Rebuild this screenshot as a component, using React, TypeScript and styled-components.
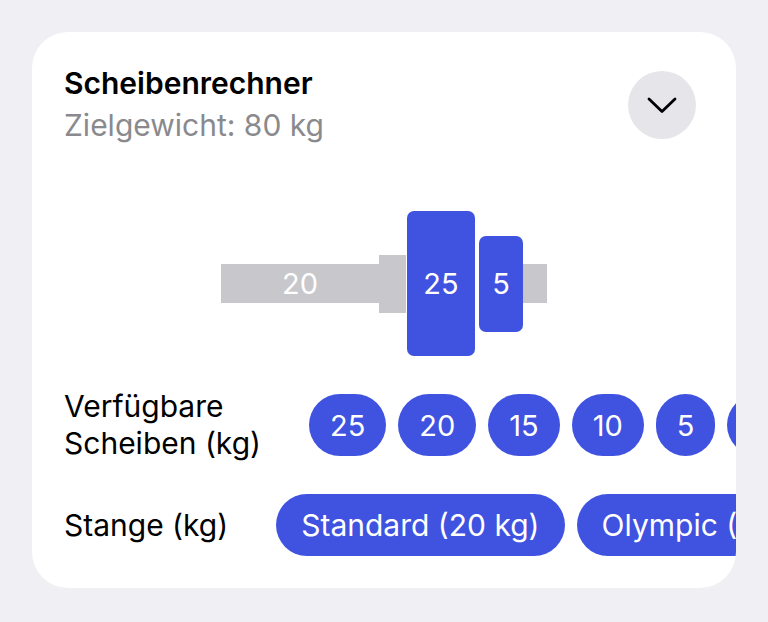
import React from 'react';
import styled, { createGlobalStyle } from 'styled-components';

const GlobalStyle = createGlobalStyle`
  html, body {
    margin: 0;
    padding: 0;
    background: #efeff4;
    font-family: 'Inter', 'Noto Sans', sans-serif;
    -webkit-font-smoothing: antialiased;
  }
`;

const Page = styled.div`
  padding: 32px;
  width: 704px;
`;

const Card = styled.div`
  background: #ffffff;
  border-radius: 36px;
  padding: 32px 32px 32px;
  overflow: hidden;
`;

const Header = styled.div`
  display: flex;
  justify-content: space-between;
  align-items: center;
`;

const Title = styled.div`
  font-size: 30px;
  line-height: 38px;
  font-weight: 600;
  color: #000;
`;

const Subtitle = styled.div`
  font-size: 30px;
  line-height: 38px;
  margin-top: 4px;
  color: #8a8a8e;
`;

const ToggleButton = styled.button`
  width: 68px;
  height: 68px;
  border-radius: 50%;
  border: none;
  background: #e5e5ea;
  display: flex;
  align-items: center;
  justify-content: center;
  padding: 0;
  margin-right: 8px;
  margin-top: 2px;
`;

const Barbell = styled.div`
  display: flex;
  align-items: center;
  justify-content: center;
  margin-top: 67px;
  height: 145px;
`;

const Bar = styled.div<{ $w: number }>`
  width: ${p => p.$w}px;
  height: 39px;
  background: #c7c7cc;
  color: #fff;
  font-size: 29px;
  display: flex;
  align-items: center;
  justify-content: center;
`;

const Collar = styled.div`
  width: 27px;
  height: 58px;
  background: #c7c7cc;
`;

const Plates = styled.div`
  display: flex;
  align-items: center;
  gap: 4px;
  margin-left: 1px;
`;

const Plate = styled.div<{ $w: number; $h: number }>`
  width: ${p => p.$w}px;
  height: ${p => p.$h}px;
  border-radius: 7px;
  background: #3f52e0;
  color: #fff;
  font-size: 29px;
  display: flex;
  align-items: center;
  justify-content: center;
`;

const Row = styled.div`
  display: flex;
  align-items: center;
  gap: 48px;
  margin-top: 32px;
`;

const Label = styled.div`
  font-size: 30px;
  line-height: 37px;
  color: #000;
  flex-shrink: 0;
`;

const ChipList = styled.div`
  display: flex;
  gap: 12px;
  overflow: hidden;
  margin-right: -32px;
  flex: 1;
  min-width: 0;
`;

const Chip = styled.div<{ $text?: boolean }>`
  flex-shrink: 0;
  height: 62px;
  border-radius: 31px;
  padding: 0 ${p => (p.$text ? 25 : 21)}px;
  background: #3f52e0;
  color: #fff;
  font-size: ${p => (p.$text ? 30 : 29)}px;
  display: flex;
  align-items: center;
  justify-content: center;
  white-space: nowrap;
`;

const plates = [25, 20, 15, 10, 5, 2.5];
const bars = ['Standard (20 kg)', 'Olympic (20 kg)', 'Kurz (10 kg)'];

export default function App() {
  return (
    <Page>
      <GlobalStyle />
      <Card>
        <Header>
          <div>
            <Title>Scheibenrechner</Title>
            <Subtitle>Zielgewicht: 80 kg</Subtitle>
          </div>
          <ToggleButton aria-label="Ausklappen">
            <svg width="32" height="18" viewBox="0 0 32 18">
              <polyline
                points="3,3 16,15.5 29,3"
                fill="none"
                stroke="#000"
                strokeWidth="2.8"
                strokeLinecap="round"
                strokeLinejoin="round"
              />
            </svg>
          </ToggleButton>
        </Header>

        <Barbell>
          <Bar $w={158}>20</Bar>
          <Collar />
          <Plates>
            <Plate $w={68} $h={145}>25</Plate>
            <Plate $w={44} $h={96}>5</Plate>
          </Plates>
          <Bar $w={24} />
        </Barbell>

        <Row>
          <Label>
            Verfügbare
            <br />
            Scheiben (kg)
          </Label>
          <ChipList>
            {plates.map(p => (
              <Chip key={p}>{p}</Chip>
            ))}
          </ChipList>
        </Row>

        <Row>
          <Label>Stange (kg)</Label>
          <ChipList>
            {bars.map(b => (
              <Chip key={b} $text>
                {b}
              </Chip>
            ))}
          </ChipList>
        </Row>
      </Card>
    </Page>
  );
}
